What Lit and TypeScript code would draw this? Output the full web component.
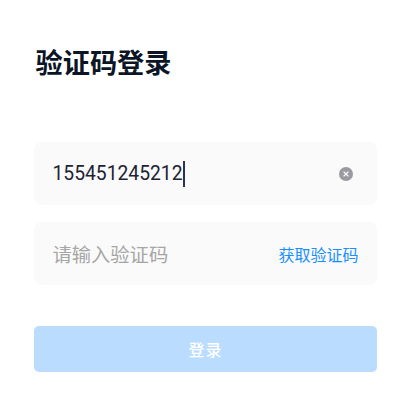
import { LitElement, html, css } from "lit";
import { customElement } from "lit/decorators.js";

@customElement("app-root")
export class AppRoot extends LitElement {
  static styles = css`
    :host {
      display: block;
      width: 411px;
      height: 403px;
      background: #fff;
      font-family: Roboto, "Noto Sans CJK SC", sans-serif;
      overflow: hidden;
    }
    .page {
      box-sizing: border-box;
      height: 100%;
      padding: 45px 34px 0;
      display: flex;
      flex-direction: column;
    }
    .title {
      margin: 0 0 0 1.5px;
      font-size: 27.2px;
      line-height: 38px;
      font-weight: 700;
      color: #0b1526;
    }
    .field {
      height: 63px;
      border-radius: 8px;
      background: #fafafa;
      display: flex;
      align-items: center;
      padding: 0 19px 0 18.5px;
      font-size: 19.3px;
    }
    .phone {
      margin-top: 59px;
      color: #1c2333;
    }
    .code {
      margin-top: 17px;
    }
    .value {
      display: inline-flex;
      align-items: center;
      flex: 1;
    }
    .caret {
      width: 2px;
      height: 26px;
      background: #2b3350;
    }
    .placeholder {
      flex: 1;
      color: #a6a6a6;
    }
    .clear {
      width: 14px;
      height: 14px;
      margin-right: 5px;
      display: block;
    }
    .send {
      color: #1890ff;
      font-size: 16px;
      transform: translateX(0.5px);
    }
    .submit {
      margin-top: 41px;
      height: 46px;
      border: 0;
      border-radius: 5px;
      background: #badcff;
      color: #fff;
      font: inherit;
      font-size: 16px;
      font-weight: 500;
      letter-spacing: 1px;
      padding: 0;
    }
  `;

  render() {
    return html`
      <div class="page">
        <h1 class="title">验证码登录</h1>
        <div class="field phone">
          <span class="value">155451245212<span class="caret"></span></span>
          <svg class="clear" viewBox="0 0 14 14" aria-hidden="true">
            <circle cx="7" cy="7" r="7" fill="#9a9aa0"></circle>
            <path d="M4.6 4.6l4.8 4.8M9.4 4.6l-4.8 4.8" stroke="#fff" stroke-width="1.3" fill="none"></path>
          </svg>
        </div>
        <div class="field code">
          <span class="placeholder">请输入验证码</span>
          <span class="send">获取验证码</span>
        </div>
        <button class="submit">登录</button>
      </div>
    `;
  }
}
